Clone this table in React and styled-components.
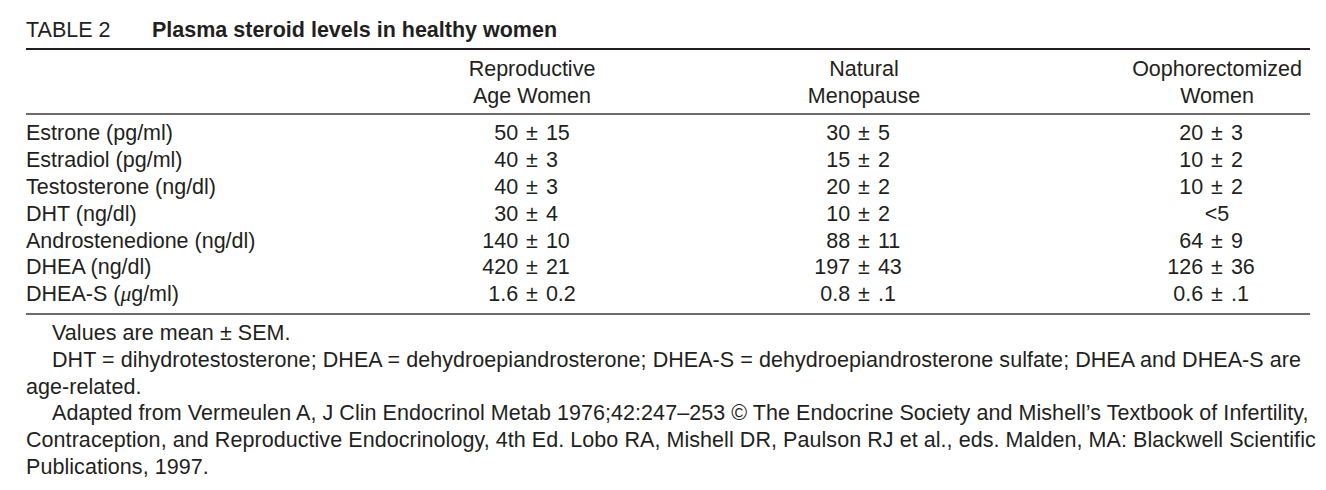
import React from "react";
import styled, { createGlobalStyle } from "styled-components";

const GlobalStyle = createGlobalStyle`
  html, body {
    margin: 0;
    padding: 0;
    background: #ffffff;
  }
  body {
    font-family: "Liberation Sans", Arial, Helvetica, sans-serif;
    color: #231f20;
  }
`;

const Page = styled.div`
  width: 1284px;
  padding: 17px 0 0 26px;
  font-size: 21.5px;
  line-height: 26.8px;
`;

const TitleBar = styled.div`
  display: flex;
  align-items: baseline;
  padding-bottom: 4px;
`;

const TableNo = styled.span`
  width: 126px;
  flex: none;
`;

const TableTitle = styled.span`
  font-weight: 700;
`;

const Rule = styled.div`
  height: ${(p) => p.$thick}px;
  background: ${(p) => p.$color};
`;

const Grid = styled.div`
  display: grid;
  grid-template-columns: 434px 144px 520px 186px;
  padding: ${(p) => p.$pad};
`;

const HeadCell = styled.div`
  text-align: center;
  white-space: nowrap;
`;

const Label = styled.div`
  white-space: nowrap;
`;

const ValueCell = styled.div`
  display: grid;
  grid-template-columns: 1fr auto 1fr;
  column-gap: 8px;
  white-space: nowrap;
`;

const Left = styled.span`
  text-align: right;
`;

const Right = styled.span`
  text-align: left;
`;

const Single = styled.div`
  text-align: center;
  white-space: nowrap;
`;

const Mu = styled.i`
  font-family: "Liberation Serif", "Times New Roman", serif;
`;

const Notes = styled.div`
  width: 1296px;
  padding-top: 5px;
  letter-spacing: 0.06px;
`;

const Note = styled.p`
  margin: 0;
  text-indent: 26px;
`;

const columns = [
  ["Reproductive", "Age Women"],
  ["Natural", "Menopause"],
  ["Oophorectomized", "Women"],
];

const rows = [
  { label: "Estrone (pg/ml)", v: ["50 ± 15", "30 ± 5", "20 ± 3"] },
  { label: "Estradiol (pg/ml)", v: ["40 ± 3", "15 ± 2", "10 ± 2"] },
  { label: "Testosterone (ng/dl)", v: ["40 ± 3", "20 ± 2", "10 ± 2"] },
  { label: "DHT (ng/dl)", v: ["30 ± 4", "10 ± 2", "<5"] },
  { label: "Androstenedione (ng/dl)", v: ["140 ± 10", "88 ± 11", "64 ± 9"] },
  { label: "DHEA (ng/dl)", v: ["420 ± 21", "197 ± 43", "126 ± 36"] },
  {
    label: (
      <>
        DHEA-S (<Mu>μ</Mu>g/ml)
      </>
    ),
    v: ["1.6 ± 0.2", "0.8 ± .1", "0.6 ± .1"],
  },
];

function Value({ text }) {
  const parts = text.split(" ± ");
  if (parts.length !== 2) return <Single>{text}</Single>;
  return (
    <ValueCell>
      <Left>{parts[0]}</Left>
      <span>±</span>
      <Right>{parts[1]}</Right>
    </ValueCell>
  );
}

export default function App() {
  return (
    <>
      <GlobalStyle />
      <Page>
        <TitleBar>
          <TableNo>TABLE 2</TableNo>
          <TableTitle>Plasma steroid levels in healthy women</TableTitle>
        </TitleBar>
        <Rule $thick={2} $color="#231f20" />
        <Grid $pad="6px 0 4px">
          <div />
          {columns.map((c, i) => (
            <HeadCell key={i}>
              {c[0]}
              <br />
              {c[1]}
            </HeadCell>
          ))}
        </Grid>
        <Rule $thick={2} $color="#6d6b6b" />
        <Grid $pad="5px 0 5px">
          {rows.map((r, i) => (
            <React.Fragment key={i}>
              <Label>{r.label}</Label>
              {r.v.map((v, j) => (
                <Value key={j} text={v} />
              ))}
            </React.Fragment>
          ))}
        </Grid>
        <Rule $thick={2} $color="#6d6b6b" />
        <Notes>
          <Note>Values are mean ± SEM.</Note>
          <Note>
            DHT = dihydrotestosterone; DHEA = dehydroepiandrosterone; DHEA-S =
            dehydroepiandrosterone sulfate; DHEA and DHEA-S are age-related.
          </Note>
          <Note>
            Adapted from Vermeulen A, J Clin Endocrinol Metab 1976;42:247–253 ©
            The Endocrine Society and Mishell’s Textbook of Infertility,
            Contraception, and Reproductive Endocrinology, 4th Ed. Lobo RA,
            Mishell DR, Paulson RJ et al., eds. Malden, MA: Blackwell Scientific
            Publications, 1997.
          </Note>
        </Notes>
      </Page>
    </>
  );
}
